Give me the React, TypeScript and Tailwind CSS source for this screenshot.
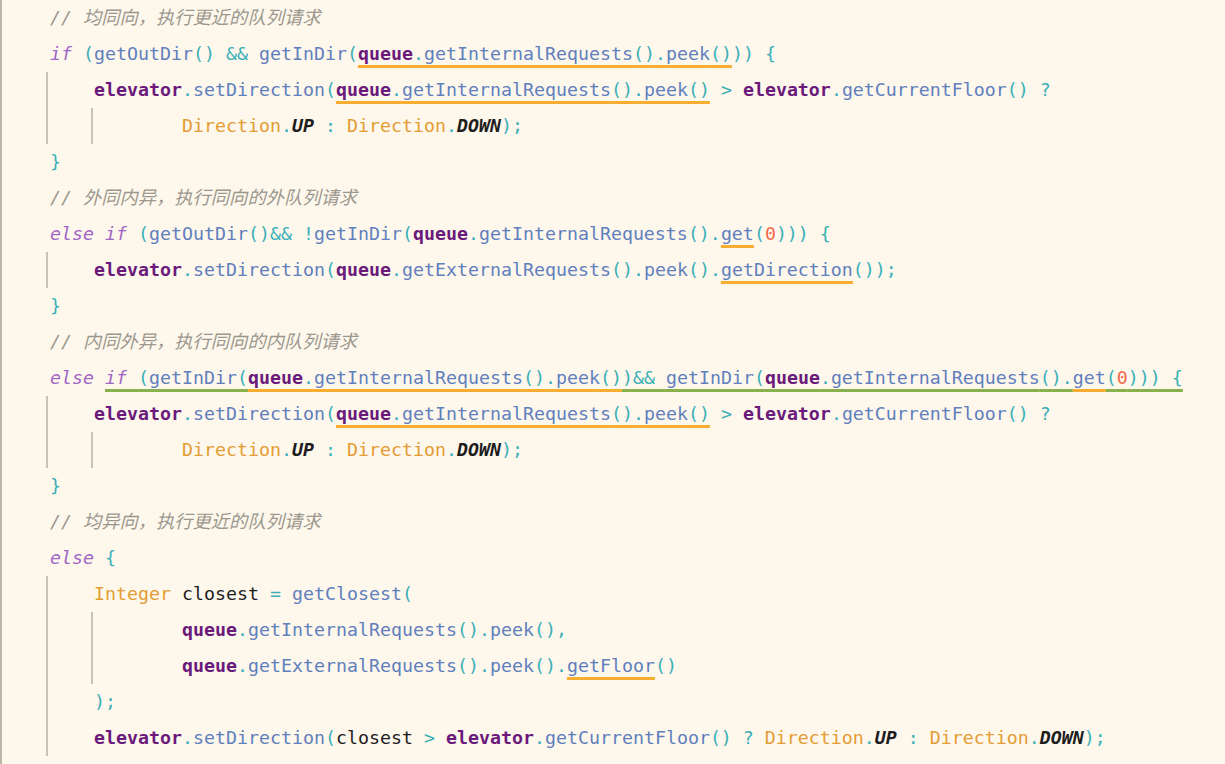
import React from 'react';

type Kind = 'kw' | 'fn' | 'p' | 'fld' | 'cls' | 'cst' | 'id' | 'num' | 'cm';
type Tok = [Kind, string, ('o' | 'g')?];

const kindClass: Record<Kind, string> = {
  kw: 'italic text-[#a067c6]',
  fn: 'text-[#5f7fbd]',
  p: 'text-[#3aafb6]',
  fld: 'font-bold text-[#6a1a7b]',
  cls: 'text-[#e39d34]',
  cst: 'font-bold italic text-[#1d1d1d]',
  id: 'text-[#1d1d1d]',
  num: 'text-[#f2694c]',
  cm: 'italic text-[#9b978e]',
};

const lineClass: Record<'o' | 'g', string> = {
  o: 'underline decoration-[#f6ad30] decoration-[3px] underline-offset-[5px] [text-decoration-skip-ink:none]',
  g: 'underline decoration-[#88b04c] decoration-[3px] underline-offset-[5px] [text-decoration-skip-ink:none]',
};

// queue.getInternalRequests().peek(), optionally underlined
const qPeek = (u?: 'o' | 'g'): Tok[] => [
  ['fld', 'queue', u],
  ['p', '.', u],
  ['fn', 'getInternalRequests', u],
  ['p', '()', u],
  ['p', '.', u],
  ['fn', 'peek', u],
  ['p', '()', u],
];

const setDirPeek: Tok[] = [
  ['fld', 'elevator'],
  ['p', '.'],
  ['fn', 'setDirection'],
  ['p', '('],
  ...qPeek('o'),
  ['p', ' > '],
  ['fld', 'elevator'],
  ['p', '.'],
  ['fn', 'getCurrentFloor'],
  ['p', '() ?'],
];

const upDown: Tok[] = [
  ['cls', 'Direction'],
  ['p', '.'],
  ['cst', 'UP'],
  ['p', ' : '],
  ['cls', 'Direction'],
  ['p', '.'],
  ['cst', 'DOWN'],
  ['p', ');'],
];

const Code = ({ toks, pad }: { toks: Tok[]; pad: string }) => (
  <div className={`h-9 flex items-center whitespace-pre ${pad}`}>
    {toks.map(([k, t, u], i) => (
      <span key={i} className={`${kindClass[k]} ${u ? lineClass[u] : ''}`}>
        {t}
      </span>
    ))}
  </div>
);

// top level line (x = 50)
const Top = ({ toks }: { toks: Tok[] }) => <Code toks={toks} pad="pl-[4px]" />;
// one indent inside a guide (x = 94)
const In1 = ({ toks }: { toks: Tok[] }) => <Code toks={toks} pad="pl-[46px]" />;
// continuation inside nested guide (x = 182)
const In2 = ({ toks }: { toks: Tok[] }) => <Code toks={toks} pad="pl-[89px]" />;

const Guide = ({ children }: { children: React.ReactNode }) => (
  <div className="border-l-2 border-[#c8c4b4]">{children}</div>
);
const Guide2 = ({ children }: { children: React.ReactNode }) => (
  <div className="ml-[43px] border-l-2 border-[#c8c4b4]">{children}</div>
);

const comment = (s: string): Tok[] => [['cm', '// ' + s]];
const close: Tok[] = [['p', '}']];

export default function App() {
  return (
    <div className="w-[1225px] h-[764px] overflow-hidden bg-[#fef7ec] border-l-2 border-[#bcb8a7] font-['DejaVu_Sans_Mono','Noto_Sans_CJK_SC',monospace] text-[18.27px] leading-9">
      <div className="pl-[44px]">
        <Top toks={comment('均同向，执行更近的队列请求')} />
        <Top
          toks={[
            ['kw', 'if'],
            ['p', ' ('],
            ['fn', 'getOutDir'],
            ['p', '() && '],
            ['fn', 'getInDir'],
            ['p', '('],
            ...qPeek('o'),
            ['p', ')) {'],
          ]}
        />
        <Guide>
          <In1 toks={setDirPeek} />
          <Guide2>
            <In2 toks={upDown} />
          </Guide2>
        </Guide>
        <Top toks={close} />

        <Top toks={comment('外同内异，执行同向的外队列请求')} />
        <Top
          toks={[
            ['kw', 'else if'],
            ['p', ' ('],
            ['fn', 'getOutDir'],
            ['p', '()&& !'],
            ['fn', 'getInDir'],
            ['p', '('],
            ['fld', 'queue'],
            ['p', '.'],
            ['fn', 'getInternalRequests'],
            ['p', '().'],
            ['fn', 'get', 'o'],
            ['p', '('],
            ['num', '0'],
            ['p', '))) {'],
          ]}
        />
        <Guide>
          <In1
            toks={[
              ['fld', 'elevator'],
              ['p', '.'],
              ['fn', 'setDirection'],
              ['p', '('],
              ['fld', 'queue'],
              ['p', '.'],
              ['fn', 'getExternalRequests'],
              ['p', '().'],
              ['fn', 'peek'],
              ['p', '().'],
              ['fn', 'getDirection', 'o'],
              ['p', '());'],
            ]}
          />
        </Guide>
        <Top toks={close} />

        <Top toks={comment('内同外异，执行同向的内队列请求')} />
        <Top
          toks={[
            ['kw', 'else '],
            ['kw', 'if', 'g'],
            ['p', ' (', 'g'],
            ['fn', 'getInDir', 'g'],
            ['p', '(', 'g'],
            ...qPeek('o'),
            ['p', ')&& ', 'g'],
            ['fn', 'getInDir', 'g'],
            ['p', '(', 'g'],
            ['fld', 'queue', 'g'],
            ['p', '.', 'g'],
            ['fn', 'getInternalRequests', 'g'],
            ['p', '().', 'g'],
            ['fn', 'get', 'o'],
            ['p', '(', 'g'],
            ['num', '0', 'g'],
            ['p', '))) {', 'g'],
          ]}
        />
        <Guide>
          <In1 toks={setDirPeek} />
          <Guide2>
            <In2 toks={upDown} />
          </Guide2>
        </Guide>
        <Top toks={close} />

        <Top toks={comment('均异向，执行更近的队列请求')} />
        <Top
          toks={[
            ['kw', 'else'],
            ['p', ' {'],
          ]}
        />
        <Guide>
          <In1
            toks={[
              ['cls', 'Integer'],
              ['id', ' closest'],
              ['p', ' = '],
              ['fn', 'getClosest'],
              ['p', '('],
            ]}
          />
          <Guide2>
            <In2 toks={[...qPeek(), ['p', ',']]} />
            <In2
              toks={[
                ['fld', 'queue'],
                ['p', '.'],
                ['fn', 'getExternalRequests'],
                ['p', '().'],
                ['fn', 'peek'],
                ['p', '().'],
                ['fn', 'getFloor', 'o'],
                ['p', '()'],
              ]}
            />
          </Guide2>
          <In1 toks={[['p', ');']]} />
          <In1
            toks={[
              ['fld', 'elevator'],
              ['p', '.'],
              ['fn', 'setDirection'],
              ['p', '('],
              ['id', 'closest'],
              ['p', ' > '],
              ['fld', 'elevator'],
              ['p', '.'],
              ['fn', 'getCurrentFloor'],
              ['p', '() ? '],
              ...upDown,
            ]}
          />
        </Guide>
      </div>
    </div>
  );
}
